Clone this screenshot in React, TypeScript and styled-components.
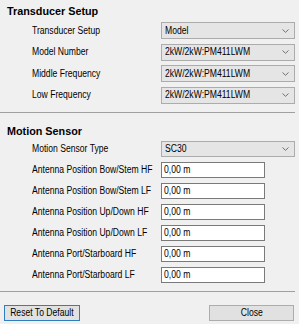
import React from 'react';
import styled, { createGlobalStyle } from 'styled-components';

const GlobalStyle = createGlobalStyle`
  html, body {
    margin: 0;
    padding: 0;
    background: #f0f0f0;
  }
`;

const Page = styled.div`
  width: 299px;
  height: 324px;
  background: #f0f0f0;
  font-family: 'Liberation Sans', Arial, sans-serif;
  font-size: 10px;
  color: #000;
  padding-top: 5px;
  box-sizing: border-box;
  overflow: hidden;
`;

// the dialog font is narrower than Arial, so squeeze the glyphs
const Narrow = styled.span<{ center?: boolean }>`
  display: inline-block;
  white-space: nowrap;
  line-height: 12px;
  transform: scaleX(0.86);
  transform-origin: ${({ center }) => (center ? 'center' : 'left')} center;
`;

const SectionTitle = styled.div`
  font-weight: bold;
  font-size: 10.8px;
  line-height: 13px;
  height: 13px;
  padding-left: 7px;
`;

const Rows = styled.div<{ gap: number; top: number }>`
  display: flex;
  flex-direction: column;
  gap: ${({ gap }) => gap}px;
  margin-top: ${({ top }) => top}px;
`;

const Row = styled.div<{ h: number }>`
  display: grid;
  grid-template-columns: 129px 1fr;
  align-items: center;
  height: ${({ h }) => h}px;
  padding-left: 32px;
  padding-right: 4px;
`;

const Combo = styled.div<{ h: number }>`
  display: flex;
  align-items: center;
  justify-content: space-between;
  height: ${({ h }) => h}px;
  box-sizing: border-box;
  border: 1px solid #acacac;
  background: #e5e5e5;
  padding: 0 5px 0 3px;
  overflow: hidden;
`;

const TextBox = styled.div`
  width: 104px;
  height: 16px;
  box-sizing: border-box;
  border: 1px solid #7a7a7a;
  background: #fff;
  padding-left: 2px;
  display: flex;
  align-items: center;
`;

const Separator = styled.div<{ top: number; bottom: number }>`
  width: 295px;
  height: 1px;
  background: #a0a0a0;
  margin-top: ${({ top }) => top}px;
  margin-bottom: ${({ bottom }) => bottom}px;
`;

const Footer = styled.div`
  display: flex;
  justify-content: space-between;
  padding: 0 5px 0 4px;
`;

const Button = styled.div<{ primary?: boolean; w: number }>`
  width: ${({ w }) => w}px;
  height: 16px;
  box-sizing: border-box;
  display: flex;
  align-items: center;
  justify-content: center;
  background: #e1e1e1;
  border: 1px solid ${({ primary }) => (primary ? '#2f7fc0' : '#adadad')};
`;

const Chevron = () => (
  <svg width="7" height="4" viewBox="0 0 7 4">
    <polyline points="0.5,0.5 3.5,3.3 6.5,0.5" fill="none" stroke="#707070" strokeWidth="1" />
  </svg>
);

const transducerRows = [
  { label: 'Transducer Setup', value: 'Model' },
  { label: 'Model Number', value: '2kW/2kW:PM411LWM' },
  { label: 'Middle Frequency', value: '2kW/2kW:PM411LWM' },
  { label: 'Low Frequency', value: '2kW/2kW:PM411LWM' },
];

const motionRows = [
  'Antenna Position Bow/Stem HF',
  'Antenna Position Bow/Stem LF',
  'Antenna Position Up/Down HF',
  'Antenna Position Up/Down LF',
  'Antenna Port/Starboard HF',
  'Antenna Port/Starboard LF',
];

export default function App() {
  return (
    <Page>
      <GlobalStyle />
      <SectionTitle>Transducer Setup</SectionTitle>
      <Rows gap={4.5} top={4}>
        {transducerRows.map(r => (
          <Row h={17} key={r.label}>
            <Narrow>{r.label}</Narrow>
            <Combo h={17}>
              <Narrow>{r.value}</Narrow>
              <Chevron />
            </Combo>
          </Row>
        ))}
      </Rows>
      <Separator top={8.5} bottom={11.7} />
      <SectionTitle>Motion Sensor</SectionTitle>
      <Rows gap={5} top={3.3}>
        <Row h={16}>
          <Narrow>Motion Sensor Type</Narrow>
          <Combo h={16}>
            <Narrow>SC30</Narrow>
            <Chevron />
          </Combo>
        </Row>
        {motionRows.map(label => (
          <Row h={16} key={label}>
            <Narrow>{label}</Narrow>
            <TextBox>
              <Narrow>0,00 m</Narrow>
            </TextBox>
          </Row>
        ))}
      </Rows>
      <Separator top={8} bottom={13} />
      <Footer>
        <Button primary w={76}>
          <Narrow center>Reset To Default</Narrow>
        </Button>
        <Button w={85}>
          <Narrow center>Close</Narrow>
        </Button>
      </Footer>
    </Page>
  );
}
